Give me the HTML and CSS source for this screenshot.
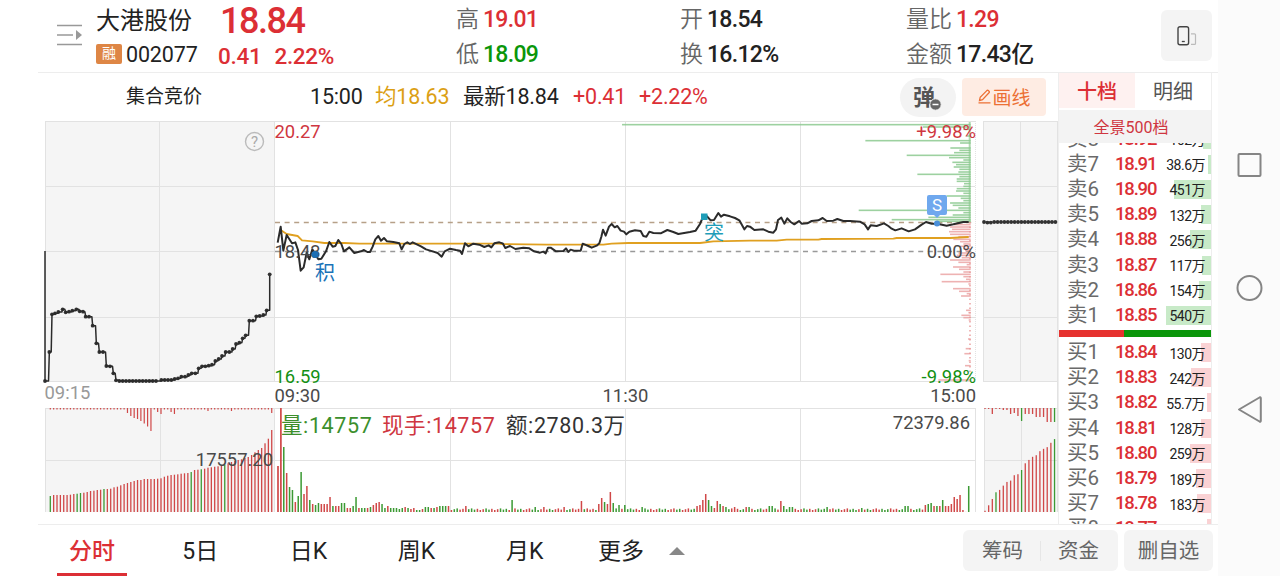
FILE: index.html
```
<!DOCTYPE html>
<html lang="zh-CN">
<head>
    <meta charset="UTF-8">
    <meta name="viewport" content="width=device-width, initial-scale=1.0">
    <title>大港股份 002077</title>
    <link rel="stylesheet" href="styles.css">
</head>
<body>
<div class="app">
    <header class="header">
        <svg class="menu-icon" width="28" height="24" viewBox="0 0 28 24">
            <path d="M1 2.5h25M1 12h16M1 21.5h25" stroke="#999" stroke-width="1.6" fill="none"/>
            <path d="M20 7l6 5-6 5z" fill="#999"/>
        </svg>
        <div class="stock">
            <div class="stock-name">大港股份</div>
            <div class="stock-code"><span class="tag">融</span>002077</div>
        </div>
        <div class="price red">
            <div class="price-now">18.84</div>
            <div class="price-diff"><span>0.41</span><span>2.22%</span></div>
        </div>
        <div class="stat">
            <div><label>高</label><b class="red">19.01</b></div>
            <div><label>低</label><b class="green">18.09</b></div>
        </div>
        <div class="stat">
            <div><label>开</label><b>18.54</b></div>
            <div><label>换</label><b>16.12%</b></div>
        </div>
        <div class="stat">
            <div><label>量比</label><b class="red">1.29</b></div>
            <div><label>金额</label><b>17.43亿</b></div>
        </div>
        <button class="rotate-btn">
            <svg width="22" height="22" viewBox="0 0 22 22" fill="none">
                <rect x="2" y="1.7" width="10.6" height="18" rx="2" stroke="#444" stroke-width="1.4"/>
                <path d="M5.8 16.5h3" stroke="#444" stroke-width="1.3"/>
                <path d="M15 8.8h3.5q1 0 1 1v8.6q0 1-1 1H15" stroke="#bbb" stroke-width="1.2"/>
            </svg>
        </button>
    </header>

    <div class="main">
        <div class="left">
            <div class="info">
                <span class="info-title">集合竞价</span>
                <span>15:00</span>
                <span class="orange">均18.63</span>
                <span>最新18.84</span>
                <span class="red">+0.41</span>
                <span class="red">+2.22%</span>
                <button class="danmu-btn">弹
                    <svg width="13" height="13" viewBox="0 0 13 13">
                        <circle cx="6.5" cy="6.5" r="5.7" fill="#666" stroke="#f3f3f3"/>
                        <path d="M3.5 6.5h6" stroke="#fff" stroke-width="1.5"/>
                    </svg>
                </button>
                <button class="draw-btn">
                    <svg width="15" height="15" viewBox="0 0 14 15" fill="none" stroke="#ec7035" stroke-width="1.3">
                        <path d="M2 11.6l.7-3.4L9.3 1.6q.8-.7 1.6 0l.6.6q.8.8 0 1.6L5 10.6zM1 13.8h12"/>
                    </svg>画线
                </button>
            </div>
            <svg class="chart" id="chart" width="1020" height="402" viewBox="38 121 1020 402">
                <g fill="#f5f5f5">
                    <rect x="45" y="121" width="229" height="260"/>
                    <rect x="983" y="121" width="75" height="260"/>
                    <rect x="45" y="408" width="229" height="104"/>
                    <rect x="984" y="408" width="74" height="104"/>
                </g>
                <g stroke="#e2e2e2" fill="none">
                    <path d="M45 121.5H975.5M45 186.5H975M45 317.5H975M45 381.5H975M45 251.5H274"/>
                    <path d="M983 121.5H1058M983 186.5H1058M983 251.5H1058M983 317.5H1058M983 381.5H1058"/>
                    <path d="M45.5 121V381M159.5 121V381M274.5 121V381M450.5 121V381M625.5 121V381M800.5 121V381M983.5 121V381M1020.5 121V381M1057.5 121V512"/>
                    <path d="M45.5 408V512M160.5 408V512M274.5 408V512M450.5 408V512M625.5 408V512M800.5 408V512M975.5 408V512M984.5 408V512M1021.5 408V512"/>
                    <path d="M45 408.5H975M984 408.5H1058M45 460.5H975M984 460.5H1058"/>
                    <path d="M975.5 121V381" stroke-dasharray="1 1"/>
                </g>
                <g fill="none" stroke-dasharray="5 4.6">
                    <path d="M275 222.5H975" stroke="#b6a088" stroke-width="1.3"/>
                    <path d="M275 251.5H975" stroke="#999" stroke-width="1.5"/>
                </g>
                <g id="depth"></g>
                <g id="volume"></g>
                <g id="lines"></g>

                <g class="axis">
                    <text x="274.5" y="138" class="t-red">20.27</text>
                    <text x="274.5" y="258">18.43</text>
                    <text x="274.5" y="383" class="t-green">16.59</text>
                    <text x="976" y="138" class="t-red end">+9.98%</text>
                    <text x="976" y="258" class="end">0.00%</text>
                    <text x="976" y="383" class="t-green end">-9.98%</text>
                    <text x="44.5" y="399" class="t-grey">09:15</text>
                    <text x="274.5" y="402">09:30</text>
                    <text x="602.5" y="402">11:30</text>
                    <text x="976" y="402" class="end">15:00</text>
                    <text x="273" y="466" class="end">17557.20</text>
                    <text x="970" y="429" class="end">72379.86</text>
                </g>
                <g class="vol-info">
                    <text x="281" y="433" class="t-green2">量:14757</text>
                    <text x="382" y="433" class="t-red">现手:14757</text>
                    <text x="506" y="433">额:2780.3万</text>
                </g>

                <circle cx="254.5" cy="141.5" r="9" fill="none" stroke="#bbb" stroke-width="1.4"/>
                <text x="254.5" y="147" class="help">?</text>

                <circle cx="315" cy="254.5" r="3.6" fill="#1a6fb5"/>
                <text x="315" y="280" class="mark mark-ji">积</text>
                <rect x="701" y="213.5" width="6.5" height="6.5" fill="#1f9db8"/>
                <text x="704" y="240" class="mark mark-tu">突</text>
                <path d="M929 195h16q2 0 2 2v16q0 2-2 2h-5l-3 3-3-3h-5q-2 0-2-2v-16q0-2 2-2z" fill="#6fa8ee"/>
                <text x="937" y="211" class="mark-s">S</text>
                <circle cx="937" cy="223.5" r="3" fill="#4a8fd9"/>
            </svg>
        </div>

        <aside class="book">
            <div class="book-tabs">
                <span class="on">十档</span>
                <span>明细</span>
            </div>
            <div class="book-all">全景500档</div>
            <div class="orders sell" id="sell"></div>
            <div class="ratio"><i></i></div>
            <div class="orders buy" id="buy"></div>
        </aside>
    </div>

    <nav class="tabs">
        <a class="on">分时</a>
        <a>5日</a>
        <a>日K</a>
        <a>周K</a>
        <a>月K</a>
        <a class="more">更多<i></i></a>
        <div class="tools">
            <div class="tool-group"><span>筹码</span><i></i><span>资金</span></div>
            <div class="tool-del">删自选</div>
        </div>
    </nav>
</div>
<div class="sysnav">
    <svg width="62" height="576" viewBox="0 0 62 576" fill="none" stroke="#858585" stroke-width="2">
        <rect x="20.5" y="154" width="22" height="22" rx="1"/>
        <circle cx="31.5" cy="288" r="12"/>
        <path d="M21 409.5L41.5 397.5q1.3-.6 1.3.8v22.4q0 1.4-1.3.8z" stroke-linejoin="round"/>
    </svg>
</div>
<script src="chart.js"></script>
</body>
</html>
```
FILE: styles.css
```
* {
    box-sizing: border-box;
}

body {
    margin: 0;
    display: flex;
    width: 1280px;
    height: 576px;
    padding-left: 38px;
    overflow: hidden;
    background: #fff;
    color: #222;
    font-family: Roboto, "Noto Sans CJK SC", sans-serif;
}

button {
    border: none;
    padding: 0;
    font-family: inherit;
}

.red { color: #dc2f35 !important; }
.green { color: #0a960a !important; }
.orange { color: #dc9f14; }

.app {
    width: 1180px;
    display: flex;
    flex-direction: column;
}

/* header */
.header {
    height: 73px;
    flex: none;
    display: grid;
    grid-template-columns: 58px 122px 238px 224px 226px 255px 51px;
    border-bottom: 1px solid #ededed;
}

.menu-icon {
    margin: 23px 0 0 18px;
}

.stock-name {
    height: 41px;
    line-height: 43px;
    font-size: 24px;
}

.stock-code {
    display: flex;
    align-items: center;
    height: 26px;
    font-size: 21.5px;
    letter-spacing: -0.15px;
}

.tag {
    width: 26px;
    height: 20px;
    margin-right: 4px;
    border-radius: 2px;
    background: #de8645;
    color: #fff;
    font-size: 14px;
    line-height: 19px;
    text-align: center;
}

.price-now {
    height: 42px;
    padding-left: 2px;
    line-height: 43px;
    font-size: 36px;
    font-weight: 500;
    letter-spacing: -1.5px;
}

.price-diff {
    display: flex;
    gap: 13px;
    line-height: 29px;
    font-size: 22.5px;
    font-weight: 500;
    letter-spacing: -0.3px;
}

.stat {
    padding-top: 2px;
}

.stat div {
    display: flex;
    gap: 4px;
    height: 35px;
    line-height: 35px;
}

.stat label {
    color: #666;
    font-size: 23px;
    font-weight: 350;
}

.stat b {
    font-size: 23px;
    font-weight: 500;
    letter-spacing: -0.7px;
}

.rotate-btn {
    width: 51px;
    height: 51px;
    margin-top: 10px;
    border-radius: 6px;
    background: #f4f4f4;
    line-height: 0;
}

/* info line above the chart */
.main {
    display: flex;
    height: 451px;
}

.left {
    width: 1020px;
}

.info {
    display: grid;
    grid-template-columns: 184px 65px 88px 110px 66px 261px 62px 84px;
    align-items: center;
    height: 48px;
    padding-left: 88px;
    font-size: 21.5px;
    letter-spacing: -0.2px;
    line-height: 42px;
    white-space: nowrap;
}

.info-title {
    font-size: 19px;
    letter-spacing: 0;
}

.danmu-btn {
    position: relative;
    width: 56px;
    height: 39px;
    border-radius: 20px;
    background: #f3f3f3;
    color: #555;
    font-size: 22px;
    font-weight: 700;
    line-height: 37px;
    text-align: left;
    padding-left: 13px;
}

.danmu-btn svg {
    position: absolute;
    left: 29px;
    top: 20px;
}

.draw-btn {
    display: flex;
    align-items: center;
    justify-content: center;
    height: 38px;
    padding-bottom: 1px;
    border-radius: 4px;
    background: #feece3;
    color: #ec7035;
    font-size: 19px;
}

/* chart */
.chart {
    display: block;
}

.axis text {
    font-size: 18.4px;
    fill: #4a4a4a;
}

.vol-info text {
    font-size: 21.5px;
    letter-spacing: 0.6px;
    fill: #333;
}

.chart .t-red { fill: #cf3640; }
.chart .t-green { fill: #139013; }
.chart .t-green2 { fill: #3c8f2c; }
.chart .t-grey { fill: #999; }
.chart .end { text-anchor: end; }

.help {
    font-size: 15px;
    fill: #aaa;
    text-anchor: middle;
}

.mark { font-size: 20px; }
.mark-ji { fill: #1a73b8; }
.mark-tu { fill: #1f9db8; }

.mark-s {
    font-size: 17px;
    fill: #fff;
    text-anchor: middle;
}

/* order book */
.book {
    display: flex;
    flex-direction: column;
    width: 154px;
    border-left: 1px solid #eee;
    border-right: 1px solid #eee;
}

.book-tabs {
    display: flex;
    height: 35px;
    line-height: 39px;
    font-size: 20px;
    text-align: center;
    color: #555;
}

.book-tabs span {
    flex: 1;
    height: 35px;
}

.book-tabs .on {
    background: #fef1f0;
    color: #dc2f35;
    font-weight: 500;
}

.book-all {
    height: 33px;
    margin-top: 2px;
    padding-right: 8px;
    background: #f3f3f3;
    color: #cf3640;
    font-size: 16px;
    line-height: 36px;
    text-align: center;
}

.orders {
    display: flex;
    flex-direction: column;
    overflow: hidden;
}

.sell {
    height: 187px;
    justify-content: flex-end;
    padding-bottom: 2px;
}

.buy {
    height: 187px;
    padding-top: 3px;
}

.row {
    display: flex;
    flex: none;
    align-items: center;
    height: 25.2px;
    line-height: 25px;
    padding-left: 8px;
    background-repeat: no-repeat;
    background-position: right center;
}

.sell .row { background-image: linear-gradient(#c8eac8, #c8eac8); }
.buy .row { background-image: linear-gradient(#fad2d4, #fad2d4); }

.row span {
    width: 48px;
    color: #6a6a6a;
    font-size: 20.5px;
}

.row b {
    width: 42px;
    color: #dc2f35;
    font-size: 18.5px;
    font-weight: 500;
    letter-spacing: -1.2px;
}

.row em {
    flex: 1;
    padding: 3px 6px 0 0;
    font-size: 14px;
    font-style: normal;
    text-align: right;
    letter-spacing: -0.5px;
    white-space: nowrap;
}

.ratio {
    height: 7px;
    flex: none;
    background: #0a960a;
}

.ratio i {
    display: block;
    width: 65px;
    height: 7px;
    background: #e6322f;
}

/* bottom tabs */
.tabs {
    display: flex;
    height: 52px;
    padding-left: 19px;
    border-top: 1px solid #ededed;
    font-size: 23px;
    line-height: 54px;
}

.tabs a {
    width: 70px;
    height: 51px;
    margin-right: 38.2px;
    text-align: center;
    white-space: nowrap;
}

.tabs .on {
    color: #dc2f35;
    font-weight: 500;
    border-bottom: 3px solid #dc2f35;
}

.tabs .more {
    width: 90px;
    margin: 0;
    text-align: left;
}

.more i {
    display: inline-block;
    margin-left: 25px;
    border: 8px solid transparent;
    border-top: 0;
    border-bottom: 8px solid #888;
    vertical-align: 4px;
}

.tools {
    display: flex;
    gap: 6px;
    margin: 5px 5px 0 auto;
    font-size: 20.5px;
    line-height: 43px;
    color: #666;
}

.tool-group, .tool-del {
    height: 41px;
    border-radius: 6px;
    background: #f4f4f4;
    text-align: center;
}

.tool-group {
    display: flex;
    justify-content: center;
    gap: 17px;
    width: 155px;
}

.tool-group i {
    width: 1px;
    height: 20px;
    margin-top: 11px;
    background: #e6e6e6;
}

.tool-del {
    width: 89px;
}

.sysnav {
    width: 62px;
    background: #fbfbfb;
}
```
FILE: chart.js
```
var RED = '#d04848', GREEN = '#3c9a34';

function el(parent, name, attrs) {
    var node = document.createElementNS('http://www.w3.org/2000/svg', name);
    for (var k in attrs) node.setAttribute(k, attrs[k]);
    document.getElementById(parent).appendChild(node);
}

// "x,y x,y" stored in thirds of a pixel from an origin
function pts(str, ox, oy) {
    return str.split(' ').map(function (p) {
        var a = p.split(',');
        return [ox + a[0] / 3, oy + a[1] / 3];
    });
}

function line(points, color, width) {
    el('lines', 'polyline', {
        points: points.join(' '), fill: 'none', stroke: color,
        'stroke-width': width, 'stroke-linejoin': 'round'
    });
}

function dot(p) {
    el('lines', 'circle', {cx: p[0], cy: p[1], r: 1.9, fill: '#333'});
}

// average price
line([].concat(
    pts('44,150 62,162 95,168 108,181 140,184 175,189 235,189 280,191 700,191', 266, 180),
    pts('5,192 140,194 310,194 335,191 385,189 600,189 640,184 750,182', 500, 180),
    pts('0,374 80,374 110,371 205,371 215,369 430,368 440,366 600,366 656,363', 750, 116)
), '#e0a020', 1.8);

// current price
line([].concat(
    pts('35,188 44,140 52,212 62,165 78,190 88,187 96,210 104,272 113,262 122,218 130,238 139,208 147,222 157,238 166,236 180,214 190,186 200,200 208,198 217,180 226,192 234,214 250,202 265,219 285,214 294,210 304,216 312,216 320,200 328,178 337,168 345,182 354,174 363,184 382,186 400,190 407,208 415,192 424,187 432,192 440,187 465,199 480,208 500,214 515,219 527,230 536,214 552,206 570,210 582,212 588,222 597,190 607,199 622,191 640,194 655,201 668,196 676,202 685,190 700,187', 266, 180),
    pts('8,190 16,204 30,198 46,207 70,203 88,205 102,214 120,218 130,215 137,220 144,203 152,203 168,214 190,213 198,205 205,216 212,209 222,212 242,212 248,191 265,198 275,203 290,197 298,190 304,170 309,149 317,167 327,140 335,132 344,142 352,138 362,152 372,155 379,163 388,155 405,151 422,153 430,168 439,170 448,155 460,159 482,160 502,150 520,156 535,162 570,156 587,152 600,132 607,115 620,108 632,121 642,120 655,99 663,110 672,104 690,109 705,114 718,121 733,148 741,138 750,140', 500, 180),
    pts('0,332 13,342 40,340 55,347 70,350 78,340 84,312 94,305 103,323 112,307 122,318 133,325 147,315 155,323 172,322 185,315 205,313 218,306 230,315 250,314 262,309 280,315 300,315 330,317 344,325 354,340 362,328 380,330 402,322 415,330 425,338 436,343 455,337 476,346 495,340 515,326 528,318 545,323 562,323 590,329 610,325 640,318 656,318', 750, 116)
), '#2b2b2b', 2);

// opening auction, drawn in steps
var auction = '27,795 40,708 48,595 57,592 67,588 80,580 89,589 99,587 109,584 121,580 131,586 141,587 149,602 159,602 170,629 181,682 190,708 201,708 211,750 222,751 232,772 240,793';
var i;
for (i = 250; i <= 366; i += 10) auction += ' ' + i + ',795';
for (i = 376; i <= 408; i += 10) auction += ' ' + i + ',792';
auction += ' 416,789 426,787 436,782 447,782 457,777 467,772 478,772 488,757 498,751 508,751 518,749 528,746 538,735 548,729 558,720 569,708 580,708 590,699 600,684 610,680 620,667 629,658 640,614 651,614 661,601 671,600 682,597 692,583';
auction = pts(auction, 36, 116);
auction.forEach(dot);
var steps = [[45, 251], [45, 381]];
auction.forEach(function (p, n) {
    if (n) steps.push([p[0] - 0.8, auction[n - 1][1]]);
    steps.push(p);
});
steps.push([269.7, 310.3], [269.7, 274.3]);
line(steps, '#2b2b2b', 1.5);
dot([269.7, 274.3]);

// closing auction
for (i = 984; i < 1056; i += 3.4) dot([i, i > 986 && i < 993 ? 222.6 : 222]);
line([[983, 222], [1056, 222]], '#333', 1.2);

// order depth on the right edge: left end, y
function depth(str, oy, color) {
    pts(str, 0, oy).forEach(function (p) {
        var y = p[1], w = (662 - p[0] * 3) / 3;
        el('depth', 'rect', {x: 970.7 - w, y: y - 0.8, width: w, height: 1.6, fill: color, opacity: 0.85});
    });
}
depth('-384,26 519,33 640,40 650,60 346,74 630,81 601,96 628,103 612,110 470,118 597,125 640,132 607,139 618,146 611,153 628,160 625,168 502,175 628,182 620,189 620,196 642,203 640,211 620,218 618,225 640,232 590,240 632,247 640,254 600,261 608,268 625,276 326,283 640,290 608,297 535,304 425,311 560,316', 116, '#8cc98f');
depth('612,326 600,333 606,340 597,347 600,355 625,362 610,370 630,377 640,384 630,391 640,398 645,404 625,411 620,418 635,425 600,432 625,439 650,446 609,453 627,460 640,468 571,475 640,482 648,490 575,497 655,504 609,518 627,526 650,533 633,540 648,583 655,590 634,598 640,605 656,612 654,669 647,698 643,713 656,734 645,749 565,792', 116, '#eba5a5');
el('depth', 'path', {d: 'M969.7 122V222', stroke: '#8cc98f', 'stroke-width': 2, opacity: 0.7});
el('depth', 'path', {d: 'M970 222V380', stroke: '#e89a9a', 'stroke-width': 1.4, 'stroke-dasharray': '1.5 3'});

// volume, negative means a green bar
function bar(x, h, w, fromTop) {
    var a = Math.abs(h);
    el('volume', 'rect', {x: x - w / 2, y: fromTop ? 408 : 512 - a, width: w, height: a, fill: h < 0 ? GREEN : RED});
}

var pre = [-16, 17, 17, 17, 17, 17, 17.3, 18, -18.3, -19, 19.3, 20, 21, 21.3, 22, 22.3, -23, 23, 23.3, 24.7, 25.3, 26.7, 28, 29, 30, 31, 32, 32, 33, 33, 33, 33, 33.3, 33.7, 35.3, 36.3, 37, 37.3, 37.7, 38.3, 38.7, 39, -40, 42, 42.3, -42.7, 43.3, 44.3, 44.7, 45.3, 45.7, 46.3, -47.3, 48.7, 50, 51, 52, 52.7, 54, 55, 57, 59.7, 62, 64, 68.7, 73.3, 82];
var preTop = {23: 5, 24: 8, 25: 10, 26: 11, 27: 13, 28: 15.5, 29: 18.5, 30: 23, 32: 4, 33: 6, 36: 4, 37: 6, 66: 5, 47: 3, 54: 3};
pre.forEach(function (h, n) {
    var x = 50.3 + n * 3.355;
    bar(x, h, 1.3);
    bar(x, preTop[n] || 1.5, 1.2, true);
});

var open = [46, 104, -65, 39, -25, -22, 10, -16, -40, 18, 26, -12, 8, -7, -9, 8, 8, 8, 15, -6, 6, 6, -9, -9, 4, 4, -6, -15, 4, -4, -4, 4, -5, 7, 9, 10, -8, -4, 6, -4, -4, -4, -3, -4, 5, -4, 3, 4, -2, -2, 3, -5, -5, 4, -4, 5];
var peaks = {56: -6, 57: -6, 58: -6, 59: 6, 65: 6, 81: -12, 89: -5, 92: 5, 99: 5, 105: 11, 111: 8, 112: 14, 113: -10, 114: 8, 115: 20, 116: -9, 118: -7, 120: -7, 126: -5, 145: 6, 146: 7, 147: 12, 148: 18, 149: -12, 150: -6, 151: 4, 152: 11, 153: -8, 154: 6, 155: -5, 158: 5, 162: 5, 163: -5, 170: -6, 171: -6, 174: 11, 175: -6, 177: -5, 178: -5, 190: -5, 202: -4, 217: -6, 218: -6, 224: 7, 225: -8, 226: -9, 227: 6, 228: -6, 229: 6, 230: -12, 231: 6, 232: 6, 233: 8, 234: 15, 235: 13, 236: 17, 237: 2, 238: 0.1, 239: -26};
for (i = 0; i < 240; i++) {
    var base = (2 + (i * 7 % 5) * 0.4) * (i * 13 % 11 < 5 ? -1 : 1);
    bar(278 + i * 2.89, open[i] || peaks[i] || base, i < 2 ? 1.7 : 1.5);
}

var post = [1.5, 8, 15.5, -23.5, 26.3, 31.4, 35.8, 37.4, 43.8, 45, -50, 58, 62, 65.7, 67.6, 72.4, 75.2, 77.2, 82.4, -86.8].map(function (h) {
    return h * 0.84;
});
var postTop = [1, 1, 6, 1, 1, 2, 2, 6, 5, 8, -13, 6, 6, 6, 9, 9, 9, 14, 14, -14];
post.forEach(function (h, n) {
    bar(985 + n * 3.66, h, 1.3);
    bar(985 + n * 3.66, postTop[n], 1.3, true);
});

// order book: label, price, amount, width of the amount bar
var sell = [['卖8', '18.92', '162万', 8], ['卖7', '18.91', '38.6万', 3], ['卖6', '18.90', '451万', 37], ['卖5', '18.89', '132万', 10], ['卖4', '18.88', '256万', 21], ['卖3', '18.87', '117万', 9], ['卖2', '18.86', '154万', 12], ['卖1', '18.85', '540万', 45]];
var buy = [['买1', '18.84', '130万', 10], ['买2', '18.83', '242万', 20], ['买3', '18.82', '55.7万', 4], ['买4', '18.81', '128万', 10], ['买5', '18.80', '259万', 21], ['买6', '18.79', '189万', 15], ['买7', '18.78', '183万', 14], ['买8', '18.77', '52万', 4]];

function rows(id, list) {
    document.getElementById(id).innerHTML = list.map(function (r) {
        return '<div class="row" style="background-size:' + r[3] + 'px 19px"><span>' + r[0] + '</span><b>' + r[1] + '</b><em>' + r[2] + '</em></div>';
    }).join('');
}
rows('sell', sell);
rows('buy', buy);
```
